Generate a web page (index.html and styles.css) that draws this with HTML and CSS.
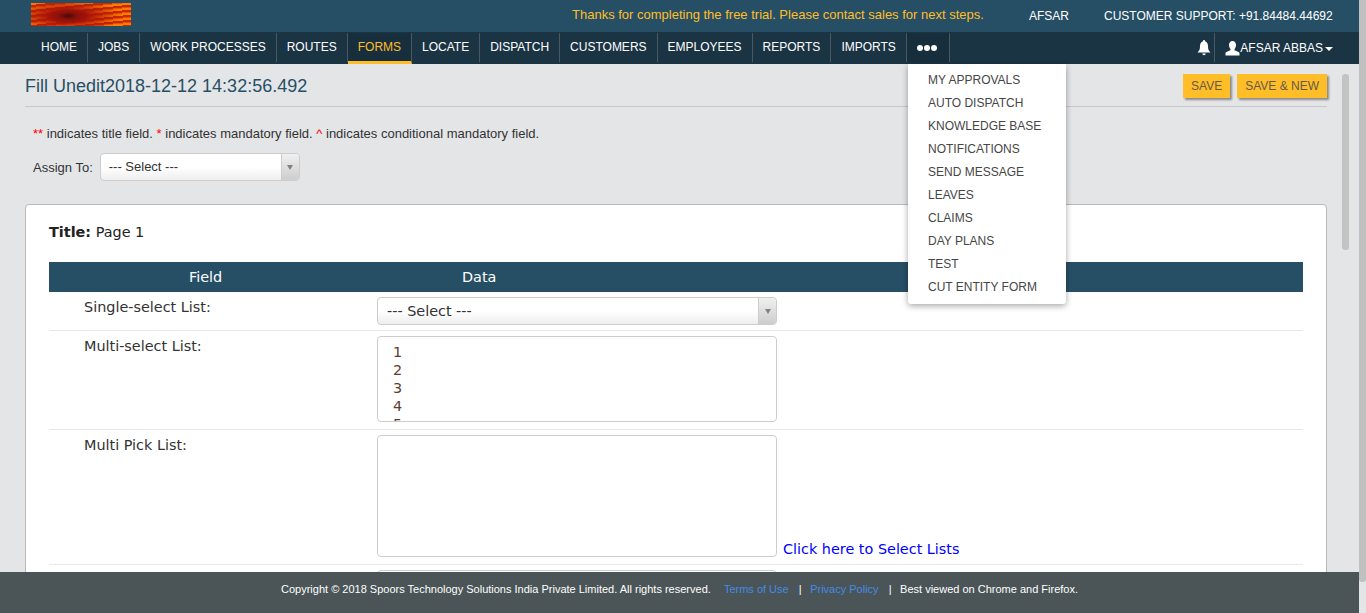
FILE: index.html
```html
<!DOCTYPE html>
<html lang="en">
  <head>
    <title>Fill Form</title>
    <link rel="stylesheet" href="styles.css">
  </head>
  <body>
    <header class="topbar">
      <div class="logo"></div>
      <div class="trial">Thanks for completing the free trial. Please contact sales for next steps.</div>
      <div class="top-user">AFSAR</div>
      <div class="support">CUSTOMER SUPPORT: +91.84484.44692</div>
    </header>

    <nav class="navbar">
      <ul class="menu">
        <li>HOME</li>
        <li>JOBS</li>
        <li>WORK PROCESSES</li>
        <li>ROUTES</li>
        <li class="active">FORMS</li>
        <li>LOCATE</li>
        <li>DISPATCH</li>
        <li>CUSTOMERS</li>
        <li>EMPLOYEES</li>
        <li>REPORTS</li>
        <li>IMPORTS</li>
        <li class="more"><span></span><span></span><span></span></li>
      </ul>
      <div class="nav-right">
        <div class="bell">
          <svg width="14" height="16" viewBox="0 0 14 16"><path fill="#fff" d="M7 0a1 1 0 0 1 1 1.200C10.300 2 11 4 11 6.500c0 3 .8 4.500 2.500 6h-13C2.200 11 3 9.500 3 6.500 3 4 3.700 2 6 1.200A1 1 0 0 1 7 0zM5.300 13.500h3.400a1.700 1.700 0 0 1-3.400 0z"/></svg>
        </div>
        <div class="user">
          <svg width="15" height="15" viewBox="0 0 15 15"><path fill="#fff" d="M7.500 0C9.700 0 11 1.700 11 4c0 1.600-.6 3-1.500 3.900v1.300c1.800.7 4 1.500 5 2.600V14.500H.5v-2.700c1-1.100 3.200-1.900 5-2.600V7.900C4.600 7 4 5.600 4 4c0-2.300 1.300-4 3.500-4z"/></svg>
          <span>AFSAR ABBAS</span>
          <i class="caret"></i>
        </div>
      </div>
    </nav>

    <ul class="more-menu">
      <li>MY APPROVALS</li>
      <li>AUTO DISPATCH</li>
      <li>KNOWLEDGE BASE</li>
      <li>NOTIFICATIONS</li>
      <li>SEND MESSAGE</li>
      <li>LEAVES</li>
      <li>CLAIMS</li>
      <li>DAY PLANS</li>
      <li>TEST</li>
      <li>CUT ENTITY FORM</li>
    </ul>

    <main class="content">
      <div class="page-head">
        <h1>Fill Unedit2018-12-12 14:32:56.492</h1>
        <div class="actions">
          <button class="btn">SAVE</button>
          <button class="btn">SAVE &amp; NEW</button>
        </div>
      </div>

      <p class="legend"><b>**</b> indicates title field. <b>*</b> indicates mandatory field. <b>^</b> indicates conditional mandatory field.</p>

      <div class="assign">
        <label>Assign To:</label>
        <div class="select select-small">
          <span class="select-text">--- Select ---</span>
          <span class="select-arrow"><i></i></span>
        </div>
      </div>

      <section class="card">
        <div class="title-line"><b>Title:</b> Page 1</div>

        <div class="table-head">
          <div class="col-field">Field</div>
          <div class="col-data">Data</div>
        </div>

        <div class="row row-single">
          <div class="col-field">Single-select List:</div>
          <div class="col-data">
            <div class="select">
              <span class="select-text">--- Select ---</span>
              <span class="select-arrow"><i></i></span>
            </div>
          </div>
        </div>

        <div class="row">
          <div class="col-field">Multi-select List:</div>
          <div class="col-data">
            <div class="listbox">
              <div>1</div>
              <div>2</div>
              <div>3</div>
              <div>4</div>
              <div>5</div>
            </div>
          </div>
        </div>

        <div class="row">
          <div class="col-field">Multi Pick List:</div>
          <div class="col-data pick">
            <div class="textbox"></div>
            <a class="pick-link">Click here to Select Lists</a>
          </div>
        </div>

        <div class="row">
          <div class="col-field"></div>
          <div class="col-data">
            <div class="select"></div>
          </div>
        </div>
      </section>
    </main>

    <div class="scroll-edge"></div>
    <div class="fake-scroll"></div>

    <footer class="footer">
      <span>Copyright © 2018 Spoors Technology Solutions India Private Limited. All rights reserved.</span>
      <a class="first">Terms of Use</a>
      <span class="sep">|</span>
      <a>Privacy Policy</a>
      <span class="sep">|</span>
      <span>Best viewed on Chrome and Firefox.</span>
    </footer>
  </body>
</html>
```

FILE: styles.css
```css
html, body {
  height: 613px;
  overflow: hidden;
}
body {
  margin: 0;
  background: rgb(228, 229, 231);
  font-family: "Liberation Sans", Arial, sans-serif;
  font-size: 12px;
  color: rgb(51, 51, 51);
}
ul {
  list-style: none;
  margin: 0;
  padding: 0;
}

/* top bar */
.topbar {
  height: 32px;
  background: rgb(38, 79, 102);
  display: flex;
  align-items: center;
  color: white;
}
.logo {
  width: 100px;
  height: 23px;
  margin: -3px 0 0 31px;
  background:
    radial-gradient(ellipse 22px 8px at 37% 56%, rgb(70, 10, 10), rgba(120, 15, 10, 0.6) 45%, transparent),
    radial-gradient(ellipse 55px 16px at 37% 56%, rgb(170, 20, 10) 35%, transparent),
    repeating-linear-gradient(174deg, rgb(255, 125, 0) 0 2px, rgb(200, 40, 5) 2px 4px, rgb(240, 80, 0) 4px 5px);
}
.trial {
  margin-left: 441px;
  margin-top: -4px;
  color: rgb(255, 190, 40);
  font-size: 13px;
  width: 457px;
  white-space: nowrap;
}
.top-user {
  width: 75px;
}
.support {
  white-space: nowrap;
}

/* nav */
.navbar {
  height: 32px;
  background: rgb(26, 52, 68);
  display: flex;
  justify-content: space-between;
  color: white;
}
.menu {
  display: flex;
  padding-left: 31px;
}
.menu li {
  height: 29px;
  margin-top: 1px;
  padding: 0 10px;
  line-height: 29px;
  border-right: 1px solid rgb(70, 90, 102);
  white-space: nowrap;
}
.menu li.active {
  color: rgb(255, 190, 40);
  background: rgb(23, 46, 61);
  border-bottom: 3px solid rgb(255, 190, 40);
  height: 28px;
}
.menu li.more {
  display: flex;
  align-items: center;
  gap: 1px;
  background: rgb(23, 46, 61);
  width: 22px;
}
.more span {
  width: 6px;
  height: 6px;
  border-radius: 50%;
  background: white;
}
.nav-right {
  display: flex;
  padding-right: 33px;
}
.bell {
  width: 17px;
  height: 29px;
  margin-top: 1px;
  display: flex;
  align-items: center;
  border-right: 1px solid rgb(70, 90, 102);
}
.user {
  display: flex;
  align-items: center;
  margin-left: 10px;
}
.caret {
  display: block;
  margin: 2px 0 0 2px;
  border-left: 4px solid transparent;
  border-right: 4px solid transparent;
  border-top: 4px solid white;
}

/* dropdown from the dots */
.more-menu {
  position: absolute;
  left: 908px;
  top: 64px;
  width: 158px;
  height: 240px;
  padding-top: 5px;
  box-sizing: border-box;
  background: white;
  border-radius: 0 0 3px 3px;
  box-shadow: 0 2px 6px rgba(0, 0, 0, 0.35);
  z-index: 5;
}
.more-menu li {
  height: 23px;
  line-height: 23px;
  padding-left: 20px;
  color: rgb(70, 70, 70);
}

/* main */
.content {
  padding: 0 39px 0 25px;
}
.page-head {
  height: 42px;
  display: flex;
  justify-content: space-between;
  align-items: center;
  border-bottom: 1px solid rgb(200, 198, 200);
}
h1 {
  margin: 2px 0 0;
  font-size: 18px;
  font-weight: normal;
  color: rgb(38, 79, 102);
}
.actions {
  display: flex;
  gap: 7px;
  margin-top: 2px;
}
.btn {
  height: 24px;
  padding: 0 8px;
  border: none;
  font-family: inherit;
  font-size: 12px;
  color: rgb(100, 90, 70);
  background: rgb(255, 190, 40);
  box-shadow: 2px 2px 2px rgba(0, 0, 0, 0.4);
}
.legend {
  margin: 20px 0 0 8px;
  font-size: 13px;
  line-height: 14px;
}
.legend b {
  font-weight: normal;
  color: red;
}
.assign {
  display: flex;
  align-items: center;
  gap: 7px;
  margin: 12px 0 0 8px;
  font-size: 13px;
}
.select {
  width: 400px;
  height: 28px;
  box-sizing: border-box;
  display: flex;
  justify-content: space-between;
  border: 1px solid rgb(205, 205, 205);
  border-radius: 4px;
  background: linear-gradient(to bottom, white 50%, rgb(238, 238, 238));
}
.select-small {
  width: 200px;
}
.select-text {
  padding-left: 8px;
  line-height: 26px;
}
.card .select-text {
  padding-left: 9px;
}
.select-arrow {
  width: 17px;
  display: flex;
  align-items: center;
  justify-content: center;
  border-left: 1px solid rgb(205, 205, 205);
  background: linear-gradient(to bottom, rgb(240, 240, 240), rgb(205, 205, 205));
  border-radius: 0 4px 4px 0;
}
.select-arrow i {
  border-left: 3px solid transparent;
  border-right: 3px solid transparent;
  border-top: 5px solid rgb(130, 130, 130);
}

/* card with the form table */
.card {
  margin-top: 23px;
  padding: 0 23px;
  height: 500px;
  background: white;
  border: 1px solid rgb(185, 185, 185);
  border-radius: 4px;
  font-family: "DejaVu Sans", Verdana, sans-serif;
  font-size: 14.4px;
}
.title-line {
  height: 57px;
  padding-top: 19px;
  box-sizing: border-box;
  color: rgb(34, 34, 34);
}
.table-head {
  height: 30px;
  display: flex;
  align-items: center;
  background: rgb(38, 79, 102);
  color: white;
}
.table-head .col-field {
  width: 328px;
  padding-left: 140px;
  box-sizing: border-box;
}
.table-head .col-data {
  padding-left: 85px;
}
.row {
  display: flex;
  padding: 5px 0 7px;
  border-bottom: 1px solid rgb(232, 232, 232);
}
.row-single {
  padding-bottom: 5px;
}
.row .col-field {
  width: 328px;
  padding-left: 35px;
  padding-top: 2px;
  box-sizing: border-box;
  color: rgb(51, 51, 51);
}
.listbox {
  width: 400px;
  height: 86px;
  overflow: hidden;
  padding: 6px 15px 0;
  box-sizing: border-box;
  border: 1px solid rgb(205, 205, 205);
  border-radius: 4px;
  line-height: 18px;
  color: rgb(90, 60, 50);
}
.textbox {
  width: 400px;
  height: 122px;
  box-sizing: border-box;
  border: 1px solid rgb(205, 205, 205);
  border-radius: 4px;
}
.pick {
  display: flex;
  align-items: flex-end;
}
.pick-link {
  margin-left: 6px;
  color: blue;
  line-height: 16px;
}

/* page scrollbar */
.scroll-edge {
  position: absolute;
  left: 1359px;
  top: 0;
  width: 7px;
  height: 582px;
  border-radius: 0 0 3px 3px;
  background: rgb(192, 192, 192);
}
.fake-scroll {
  position: absolute;
  left: 1342px;
  top: 74px;
  width: 7px;
  height: 176px;
  border-radius: 3px;
  background: rgb(195, 195, 195);
}

/* footer */
.footer {
  position: absolute;
  left: 0;
  right: 7px;
  top: 572px;
  height: 41px;
  padding: 10px 0 0 281px;
  box-sizing: border-box;
  background: rgb(75, 85, 87);
  color: white;
  font-size: 11px;
  line-height: 14px;
  white-space: nowrap;
  z-index: 6;
}
.footer a {
  color: rgb(66, 139, 232);
}
.footer .first {
  margin-left: 10px;
}
.footer .sep {
  margin: 0 5.5px 0 7px;
}
```
